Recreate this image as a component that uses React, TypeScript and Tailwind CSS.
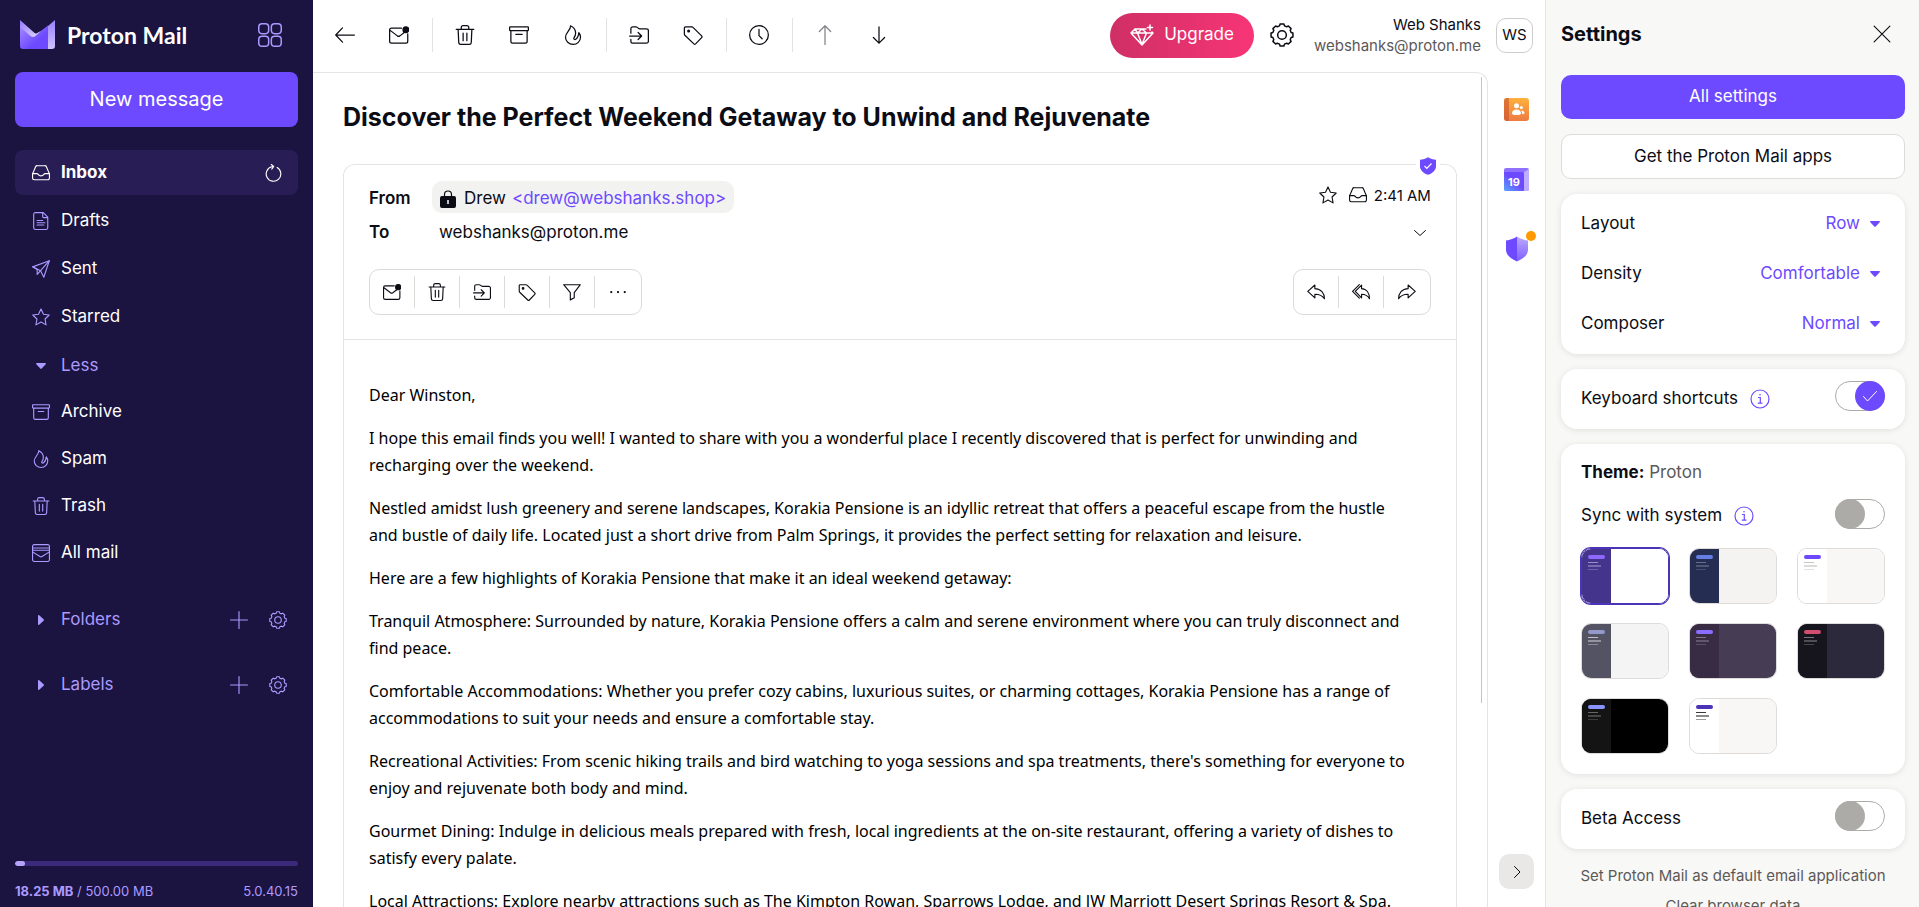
import { useState } from 'react'
import type { ReactNode } from 'react'
import clsx from 'clsx'

interface IconProps {
  className?: string
  children: ReactNode
}

function Icon({ className = 'size-[18px]', children }: IconProps) {
  return (
    <svg
      viewBox="0 0 16 16"
      fill="none"
      stroke="currentColor"
      strokeLinecap="round"
      strokeLinejoin="round"
      className={clsx('shrink-0', className)}
      aria-hidden="true"
    >
      {children}
    </svg>
  )
}

// Eight-toothed cog outline around the centre of a 16px grid
const COG_PATH = (() => {
  const points: string[] = []
  for (let i = 0; i < 8; i++) {
    for (const [offset, radius] of [[-15, 6.3], [-10, 7.4], [10, 7.4], [15, 6.3]]) {
      const angle = ((i * 45 + offset) * Math.PI) / 180
      points.push(`${(8 + radius * Math.sin(angle)).toFixed(2)} ${(8 - radius * Math.cos(angle)).toFixed(2)}`)
    }
  }
  return `M${points.join('L')}z`
})()

const icons = {
  inbox: (
    <>
      <path d="M4.6 1.5h6.8a1.5 1.5 0 0 1 1.4.9l2.4 5.7c.2.4.3.7.3 1.1v3.3a1.5 1.5 0 0 1-1.5 1.5H2a1.5 1.5 0 0 1-1.5-1.5V9.2c0-.4.1-.7.3-1.1l2.4-5.7a1.5 1.5 0 0 1 1.4-.9z" />
      <path d="M.8 8.5h3.4c.6 0 1 .3 1.3.7.5.8 1.3 1.3 2.5 1.3s2-.5 2.5-1.3c.3-.4.7-.7 1.3-.7h3.4" />
    </>
  ),
  drafts: (
    <>
      <path d="M3 .5h7l4 4V14a1.500 1.500 0 0 1-1.500 1.500H3A1.500 1.500 0 0 1 1.500 14V2A1.500 1.500 0 0 1 3 .5zM9.500.5V4A1 1 0 0 0 10.500 5H14" />
      <path d="M4.500 7.500h5M4.500 9.500h7M4.500 11.500h6" />
    </>
  ),
  sent: (
    <>
      <path d="M.6 6.100 15.400.6l-4.900 14.700-2.900-5.800z" />
      <path d="M7.600 9.500 15.300.7M.6 6.100l4 2.400v4.300l3-3.300" />
    </>
  ),
  star: <path d="m8 .8 2.200 4.700 5.100.7-3.700 3.600.9 5.200L8 12.500 3.500 15l.9-5.200L.7 6.200l5.100-.7z" />,
  archive: (
    <path d="M1 1.500h14a.5.5 0 0 1 .5.5v2a.5.5 0 0 1-.5.5H1a.5.5 0 0 1-.5-.5V2a.5.5 0 0 1 .5-.5zM1.500 4.500V13A1.500 1.500 0 0 0 3 14.500h10a1.500 1.500 0 0 0 1.500-1.500V4.500M5.500 7.500h5" />
  ),
  flame: (
    <path d="M6 .6c2.600 1.200 4.100 3.300 4.100 6 0 1.600-.6 2.700-1.400 3.900-.3.800.6 1.500 1.500.9 1.500-1 2.200-2.600 2.500-5.300.9 1.100 1.300 2.400 1.300 3.700A5.900 5.700 0 0 1 8 15.500C4.800 15.500 2 13 2 9.800c0-1.900.9-3.200 2.100-4.700C5.300 3.600 6.200 2.400 6 .6z" />
  ),
  trash: (
    <path d="M1 3.500h14M5 3.500V2a1.500 1.500 0 0 1 1.500-1.500h3A1.500 1.500 0 0 1 11 2v1.500M2.500 3.500l.5 10.600a1.500 1.500 0 0 0 1.500 1.400h7a1.500 1.500 0 0 0 1.500-1.400l.5-10.600M6.500 6.500v6M9.500 6.500v6" />
  ),
  allMail: (
    <>
      <path d="M2 .5h12A1.500 1.500 0 0 1 15.500 2v12a1.500 1.500 0 0 1-1.500 1.500H2A1.500 1.500 0 0 1 .5 14V2A1.500 1.500 0 0 1 2 .5z" />
      <path d="M.5 3.500h15M.5 5.500h15M.5 7l6.600 4.100c.6.4 1.200.4 1.800 0L15.500 7" />
    </>
  ),
  plus: <path d="M8 .5v15M.5 8h15" />,
  cog: (
    <>
      <path d={COG_PATH} />
      <circle cx="8" cy="8" r="2.900" />
    </>
  ),
  apps: (
    <>
      <rect x=".5" y=".5" width="6.600" height="6.600" rx="2.200" />
      <rect x="8.900" y=".5" width="6.600" height="6.600" rx="2.200" />
      <rect x=".5" y="8.900" width="6.600" height="6.600" rx="2.200" />
      <rect x="8.900" y="8.900" width="6.600" height="6.600" rx="2.200" />
    </>
  ),
  refresh: <path d="M11.700 3.200A6.500 6.500 0 1 1 7 2.500L8.200 2.300M6.500.4 8.600 2.200 6.900 4.500" />,
  back: <path d="M15.500 8H.7M6 2.300.6 8 6 13.700" />,
  unread: (
    <>
      <path d="M10 2.500H2A1.500 1.500 0 0 0 .5 4v9A1.500 1.500 0 0 0 2 14.500h11.500A1.500 1.500 0 0 0 15 13V7M1.200 4.500l5.500 4.200c.7.500 1.300.5 2 0L12 6.200" />
      <circle cx="13.500" cy="3.700" r="2.300" fill="currentColor" />
    </>
  ),
  move: (
    <path d="M1.500 6.500V3A1.500 1.500 0 0 1 3 1.500h2.500c.5 0 .8.1 1.100.4l1 .8c.3.2.6.3 1 .3H14A1.500 1.500 0 0 1 15.500 4.500V13a1.500 1.500 0 0 1-1.500 1.500H3A1.500 1.500 0 0 1 1.500 13v-1.500M.5 8.800H10M7.300 6l2.800 2.800-2.800 2.800" />
  ),
  tag: (
    <>
      <path d="M2 1.500h5c.4 0 .8.1 1 .4l6.900 6.800a1 1 0 0 1 0 1.400l-4.800 5a1 1 0 0 1-1.400 0L1.500 8.200a1.400 1.400 0 0 1-.4-1V2.300c0-.5.4-.8.9-.8z" />
      <circle cx="4.500" cy="4.800" r=".7" fill="currentColor" />
    </>
  ),
  clock: (
    <>
      <circle cx="8" cy="8" r="7.500" />
      <path d="M8 3.500V8.500L10.500 11" />
    </>
  ),
  up: <path d="M8 15.500V.7M3.500 5.200 8 .6l4.500 4.600" />,
  down: <path d="M8 1.500v13M3.500 10 8 14.500l4.500-4.500" />,
  filter: <path d="M.6 1.500h14.800L10 8.500v4.700L6.500 15V8.500z" />,
  more: (
    <g fill="currentColor" stroke="none">
      <circle cx="2" cy="8" r="1" />
      <circle cx="8" cy="8" r="1" />
      <circle cx="14" cy="8" r="1" />
    </g>
  ),
  reply: <path d="M7 1.800.7 7.500 7 13.200V10c3.800 0 6.500.8 8.500 4 0-5-3-8.800-8.500-9z" />,
  replyAll: (
    <path d="M8.500 1.800 2.900 7.500l5.600 5.700V10c3.300 0 5.300.8 7 4 0-5-2.500-8.800-7-9zM6.500 1.500.5 7.500l6 6" />
  ),
  forward: <path d="M9 1.800l6.300 5.700L9 13.200V10C5.200 10 2.500 10.800.5 14c0-5 3-8.800 8.500-9z" />,
  chevronDown: <path d="M2.500 5.500 8 10.500l5.500-5" />,
  chevronRight: <path d="M5.500 2.500 11 8l-5.500 5.500" />,
  close: <path d="M1 1l14 14M15 1 1 15" />,
}

type IconName = keyof typeof icons

const NAV_ITEMS: { label: string; icon: IconName }[] = [
  { label: 'Drafts', icon: 'drafts' },
  { label: 'Sent', icon: 'sent' },
  { label: 'Starred', icon: 'star' },
]

const MORE_NAV_ITEMS: { label: string; icon: IconName }[] = [
  { label: 'Archive', icon: 'archive' },
  { label: 'Spam', icon: 'flame' },
  { label: 'Trash', icon: 'trash' },
  { label: 'All mail', icon: 'allMail' },
]

const TOOLBAR_GROUPS: { label: string; icon: IconName; disabled?: boolean }[][] = [
  [
    { label: 'Back', icon: 'back' },
    { label: 'Mark as unread', icon: 'unread' },
  ],
  [
    { label: 'Move to trash', icon: 'trash' },
    { label: 'Archive', icon: 'archive' },
    { label: 'Move to spam', icon: 'flame' },
  ],
  [
    { label: 'Move to', icon: 'move' },
    { label: 'Label as', icon: 'tag' },
  ],
  [{ label: 'Snooze', icon: 'clock' }],
  [
    { label: 'Previous message', icon: 'up', disabled: true },
    { label: 'Next message', icon: 'down' },
  ],
]

const MESSAGE_ACTIONS: { label: string; icon: IconName }[] = [
  { label: 'Mark as unread', icon: 'unread' },
  { label: 'Move to trash', icon: 'trash' },
  { label: 'Move to', icon: 'move' },
  { label: 'Label as', icon: 'tag' },
  { label: 'Filter on', icon: 'filter' },
  { label: 'More', icon: 'more' },
]

const REPLY_ACTIONS: { label: string; icon: IconName }[] = [
  { label: 'Reply', icon: 'reply' },
  { label: 'Reply all', icon: 'replyAll' },
  { label: 'Forward', icon: 'forward' },
]

const PARAGRAPHS = [
  'Dear Winston,',
  'I hope this email finds you well! I wanted to share with you a wonderful place I recently discovered that is perfect for unwinding and recharging over the weekend.',
  'Nestled amidst lush greenery and serene landscapes, Korakia Pensione is an idyllic retreat that offers a peaceful escape from the hustle and bustle of daily life. Located just a short drive from Palm Springs, it provides the perfect setting for relaxation and leisure.',
  'Here are a few highlights of Korakia Pensione that make it an ideal weekend getaway:',
  'Tranquil Atmosphere: Surrounded by nature, Korakia Pensione offers a calm and serene environment where you can truly disconnect and find peace.',
  'Comfortable Accommodations: Whether you prefer cozy cabins, luxurious suites, or charming cottages, Korakia Pensione has a range of accommodations to suit your needs and ensure a comfortable stay.',
  "Recreational Activities: From scenic hiking trails and bird watching to yoga sessions and spa treatments, there's something for everyone to enjoy and rejuvenate both body and mind.",
  'Gourmet Dining: Indulge in delicious meals prepared with fresh, local ingredients at the on-site restaurant, offering a variety of dishes to satisfy every palate.',
  'Local Attractions: Explore nearby attractions such as The Kimpton Rowan, Sparrows Lodge, and JW Marriott Desert Springs Resort & Spa.',
]

const THEMES = [
  { name: 'Proton', side: '#44348c', main: '#ffffff', accent: '#8f69ff', lines: '#9a8fc4' },
  { name: 'Duotone', side: '#262d52', main: '#f4f3f2', accent: '#657ee4', lines: '#6a6f8a' },
  { name: 'Snow', side: '#ffffff', main: '#f8f7f6', accent: '#6d4aff', lines: '#c8c4c0' },
  { name: 'Classic', side: '#535364', main: '#f4f4f4', accent: '#9498cb', lines: '#c0c0c8' },
  { name: 'Legacy', side: '#372c44', main: '#463c54', accent: '#8a6eff', lines: '#7d7488' },
  { name: 'Monokai', side: '#16141c', main: '#2c293d', accent: '#d04f70', lines: '#77757c' },
  { name: 'Carbon', side: '#141414', main: '#000000', accent: '#8a94ff', lines: '#666666' },
  { name: 'Contrast', side: '#ffffff', main: '#f8f7f6', accent: '#4b34b8', lines: '#3a3a3a' },
]

const STORAGE_USED = 18.25
const STORAGE_TOTAL = 500

function ProtonLogo() {
  return (
    <a href="#inbox" className="flex items-center gap-[11px] text-white">
      <svg viewBox="0 0 36 29" className="h-[29px] w-9" aria-hidden="true">
        <defs>
          <linearGradient id="logo-body" x1="0" y1="0" x2="1" y2="1">
            <stop offset="0" stopColor="#a38bff" />
            <stop offset=".65" stopColor="#6d4aff" />
          </linearGradient>
          <linearGradient id="logo-flap" x1="0" y1="0" x2="1" y2="1">
            <stop offset="0" stopColor="#9277ff" />
            <stop offset="1" stopColor="#e2dbff" />
          </linearGradient>
          <linearGradient id="logo-edge" x1="0" y1="0" x2="0" y2="1">
            <stop offset="0" stopColor="#9a80ff" />
            <stop offset="1" stopColor="#cfc3ff" />
          </linearGradient>
        </defs>
        <path d="M0 6 13 17 28 5.500V29H3a3 3 0 0 1-3-3z" fill="url(#logo-body)" />
        <path d="M28 6 35 0v26a3 3 0 0 1-3 3h-4z" fill="url(#logo-edge)" />
        <path d="M0 0l14 12.500c1.500 1.200 2.500 1.200 4 0L21 11l-5.500 5c-1.600 1.400-3.400 1.400-5 0L0 7z" fill="url(#logo-flap)" />
      </svg>
      <span className="font-['Lato'] text-[23px] leading-7 font-bold">Proton Mail</span>
    </a>
  )
}

function Caret({ className }: { className?: string }) {
  return (
    <svg viewBox="0 0 10 6" fill="currentColor" className={clsx('h-[6px] w-[10px] shrink-0', className)} aria-hidden="true">
      <path d="M.8 0h8.400c.7 0 1 .7.5 1.200L5.700 5.600a1 1 0 0 1-1.400 0L.3 1.200C-.2.7.1 0 .8 0z" />
    </svg>
  )
}

function NavLink({ label, icon }: { label: string; icon: IconName }) {
  return (
    <li>
      <a href={`#${label}`} className="flex h-[45px] items-center gap-[11px] rounded-lg px-[17px] hover:bg-[#281d55]">
        <Icon className="size-[18px] text-[#ab9aff]">{icons[icon]}</Icon>
        {label}
      </a>
    </li>
  )
}

function NavSection({ label }: { label: string }) {
  return (
    <div className="flex h-[45px] items-center px-[17px] text-[#ab9aff]">
      <button type="button" className="flex grow items-center gap-[11px]">
        <span className="flex w-[18px] justify-center">
          <Caret className="-rotate-90" />
        </span>
        {label}
      </button>
      <button type="button" aria-label={`Add to ${label}`} className="mr-[21px]">
        <Icon>{icons.plus}</Icon>
      </button>
      <button type="button" aria-label={`Manage ${label}`} className="-mr-1.5">
        <Icon>{icons.cog}</Icon>
      </button>
    </div>
  )
}

function Sidebar() {
  return (
    <aside className="flex w-[313px] shrink-0 flex-col bg-[#1b1340] px-[15px] text-[17px] text-white">
      <div className="flex h-[70px] items-center justify-between pr-4 pb-px pl-[5px]">
        <ProtonLogo />
        <button type="button" aria-label="Proton apps" className="text-[#ab9aff]">
          <Icon className="size-6">{icons.apps}</Icon>
        </button>
      </div>
      <button type="button" className="mt-0.5 h-[55px] shrink-0 rounded-lg bg-[#6d4aff] pb-0.5 text-[20px]">
        New message
      </button>
      <nav className="mt-[23px]">
        <ul className="flex flex-col gap-[3px]">
          <li className="flex h-[45px] items-center rounded-lg bg-[#281d55] pr-4 pl-[17px]">
            <a href="#inbox" className="flex grow items-center gap-[11px] font-bold">
              <Icon>{icons.inbox}</Icon>
              Inbox
            </a>
            <button type="button" aria-label="Refresh">
              <Icon>{icons.refresh}</Icon>
            </button>
          </li>
          {NAV_ITEMS.map((item) => (
            <NavLink key={item.label} {...item} />
          ))}
        </ul>
        <button type="button" className="mt-1 flex h-[45px] w-full items-center gap-[11px] px-[17px] text-[#ab9aff]">
          <span className="flex w-[18px] justify-center">
            <Caret />
          </span>
          Less
        </button>
        <ul className="mt-px flex flex-col gap-[2px]">
          {MORE_NAV_ITEMS.map((item) => (
            <NavLink key={item.label} {...item} />
          ))}
        </ul>
      </nav>
      <div className="mt-[22px] flex flex-col gap-5">
        <NavSection label="Folders" />
        <NavSection label="Labels" />
      </div>
      <footer className="mt-auto pb-2 text-[#ab9aff]">
        <div className="h-[5px] overflow-hidden rounded-full bg-[#3b2a7c]">
          <div className="h-full rounded-full bg-[#b5a5f8]" style={{ width: `${(STORAGE_USED / STORAGE_TOTAL) * 100}%` }} />
        </div>
        <div className="mt-[17px] flex justify-between text-[13px] leading-4">
          <span>
            <strong>{STORAGE_USED} MB</strong> / {STORAGE_TOTAL.toFixed(2)} MB
          </span>
          <span>5.0.40.15</span>
        </div>
      </footer>
    </aside>
  )
}

function Toolbar() {
  return (
    <div className="flex items-center pl-[5px]" role="toolbar">
      {TOOLBAR_GROUPS.map((group, index) => (
        <div key={index} className="flex items-center">
          {index > 0 && <span className="mr-[5px] ml-[6px] h-[34px] w-px bg-[#e2e2e2]" />}
          {group.map(({ label, icon, disabled }) => (
            <button
              key={label}
              type="button"
              aria-label={label}
              disabled={disabled}
              className="flex h-10 w-[54px] items-center justify-center disabled:opacity-50"
            >
              <Icon className="size-5">{icons[icon]}</Icon>
            </button>
          ))}
        </div>
      ))}
    </div>
  )
}

function Header() {
  return (
    <header className="flex h-[72px] shrink-0 items-center justify-between pr-3 pb-0.5">
      <Toolbar />
      <div className="flex items-center">
        <button
          type="button"
          className="flex h-[45px] items-center gap-2.5 rounded-full bg-linear-to-r from-[#cf2f65] to-[#f73577] px-5 text-[17px] text-white"
        >
          <svg viewBox="0 0 24 22" fill="none" stroke="currentColor" strokeWidth="1.500" strokeLinejoin="round" strokeLinecap="round" className="h-[22px] w-6" aria-hidden="true">
            <path d="M16 5H5L1 9l11 12L23 9l-1-1M1 9h21M7.500 9 12 20.500 16.500 9M5 5l2.500 4L12 5l4.500 4" />
            <path d="M20 1v5M17.500 3.500h5" />
          </svg>
          Upgrade
        </button>
        <button type="button" aria-label="Settings" className="ml-4">
          <Icon className="size-6">{icons.cog}</Icon>
        </button>
        <button type="button" className="ml-5 flex items-center gap-[15px]">
          <span className="text-right text-[15px] leading-[21px]">
            <span className="block">Web Shanks</span>
            <span className="block text-[#5c5958]">webshanks@proton.me</span>
          </span>
          <span className="flex h-[35px] w-[37px] items-center justify-center rounded-[10px] border border-[#cfcdca] text-[15px]">
            WS
          </span>
        </button>
      </div>
    </header>
  )
}

function ActionGroup({ actions }: { actions: { label: string; icon: IconName }[] }) {
  return (
    <div className="flex h-[46px] items-center divide-x divide-[#dddbd8] rounded-[10px] border border-[#dddbd8]">
      {actions.map(({ label, icon }) => (
        <button key={label} type="button" aria-label={label} className="flex h-8 w-[45px] items-center justify-center last:w-[46px]">
          <Icon>{icons[icon]}</Icon>
        </button>
      ))}
    </div>
  )
}

function Message() {
  return (
    <article className="relative mt-[31px] rounded-t-xl border border-b-0 border-[#e6e4e2]">
      <span className="absolute -top-2 right-4 bg-white px-1">
        <svg viewBox="0 0 16 18" className="h-[18px] w-4" aria-hidden="true">
          <path d="M8 .3c2.500 1.600 5 2.200 8 2.400v6.500c0 4-3.500 7-8 8.600-4.500-1.600-8-4.600-8-8.600V2.700C3 2.500 5.500 1.900 8 .3z" fill="#6d4aff" />
          <path d="m4.500 9 2.300 2.300L11.500 6.500" fill="none" stroke="#fff" strokeWidth="1.200" />
        </svg>
      </span>
      <div className="flex flex-col border-b border-[#e6e4e2] px-[25px] pt-4 pb-6">
        <div className="flex items-center justify-between">
          <div className="flex items-center">
            <span className="w-[63px] pt-1 text-[17px] font-semibold">From</span>
            <span className="flex h-8 items-center rounded-[10px] bg-[#f2f2f0] px-2 pt-1 text-[17px]">
              <svg viewBox="0 0 16 18" className="mr-2 h-[18px] w-4" aria-hidden="true">
                <path d="M4.500 7V4.500a3.500 3.500 0 0 1 7 0V7" fill="none" stroke="#0c0c14" strokeWidth="1.200" />
                <rect y="6" width="16" height="12" rx="2" fill="#0c0c14" />
                <path d="M8 10v4" stroke="#fff" strokeWidth="1.500" />
              </svg>
              Drew
              <a href="mailto:drew@webshanks.shop" className="ml-1.5 text-[#6d4aff]">
                &lt;drew@webshanks.shop&gt;
              </a>
            </span>
          </div>
          <div className="flex items-center gap-3 pb-1">
            <button type="button" aria-label="Star message">
              <Icon>{icons.star}</Icon>
            </button>
            <span className="flex items-center gap-[7px] text-[15px]">
              <Icon>{icons.inbox}</Icon>
              <time className="pt-0.5">2:41 AM</time>
            </span>
          </div>
        </div>
        <div className="mt-[5px] flex h-[30px] items-center justify-between">
          <p className="flex text-[17px]">
            <span className="w-[70px] font-semibold">To</span>
            webshanks@proton.me
          </p>
          <button type="button" aria-label="Show details" className="mr-[3px]">
            <Icon className="size-4">{icons.chevronDown}</Icon>
          </button>
        </div>
        <div className="mt-[21px] flex justify-between">
          <ActionGroup actions={MESSAGE_ACTIONS} />
          <ActionGroup actions={REPLY_ACTIONS} />
        </div>
      </div>
      <div className="flex flex-col gap-4 pt-[42px] pr-10 pl-[25px] font-['Noto_Sans',sans-serif] text-[16px] leading-[27px] text-black">
        {PARAGRAPHS.map((text) => (
          <p key={text}>{text}</p>
        ))}
      </div>
    </article>
  )
}

function AppRail() {
  return (
    <nav className="flex w-[57px] shrink-0 flex-col items-center pt-[26px] pb-[18px]" aria-label="Side apps">
      <button type="button" aria-label="Contacts">
        <svg viewBox="0 0 25 23" className="h-[23px] w-[25px]" aria-hidden="true">
          <defs>
            <linearGradient id="contacts-bg" x1="0" y1="0" x2="0" y2="1">
              <stop offset="0" stopColor="#ffb13d" />
              <stop offset="1" stopColor="#ee7b42" />
            </linearGradient>
          </defs>
          <rect width="25" height="23" rx="3" fill="url(#contacts-bg)" />
          <path d="M3 0h2v23H3a3 3 0 0 1-3-3V3a3 3 0 0 1 3-3z" fill="#c9562f" opacity=".65" />
          <g fill="#fff">
            <circle cx="12.500" cy="7.800" r="2.500" />
            <circle cx="17.300" cy="9.500" r="1.600" />
            <path d="M8 15c0-2 2-3.500 4.500-3.500S17 13 17 15s-2 2-4.500 2S8 17 8 15zM17 12.500c2 0 3.500 1 3.500 2.500 0 .7-1 1-2.500 1 0-1.500 0-2.500-1-3.500z" />
          </g>
        </svg>
      </button>
      <button type="button" aria-label="Calendar" className="relative mt-[47px]">
        <svg viewBox="0 0 25 23" className="h-[23px] w-[25px]" aria-hidden="true">
          <defs>
            <linearGradient id="calendar-bg" x1="0" y1="1" x2=".7" y2=".2">
              <stop offset="0" stopColor="#58a8ff" />
              <stop offset=".7" stopColor="#6d4aff" />
            </linearGradient>
          </defs>
          <rect width="25" height="23" rx="2" fill="#8f70ff" />
          <path d="M20 4l5-3v20a2 2 0 0 1-2 2h-3z" fill="#bfaeff" />
          <path d="M0 4h18a2 2 0 0 1 2 2v17H2a2 2 0 0 1-2-2z" fill="url(#calendar-bg)" />
        </svg>
        <span className="absolute top-[7px] left-1 text-[11px] leading-[14px] font-bold text-white">19</span>
      </button>
      <button type="button" aria-label="Security center" className="relative mt-[45px]">
        <svg viewBox="0 0 24 26" className="h-[26px] w-6" aria-hidden="true">
          <defs>
            <linearGradient id="shield-half" x1="0" y1="0" x2="0" y2="1">
              <stop offset="0" stopColor="#bcaaff" />
              <stop offset="1" stopColor="#7f5eff" />
            </linearGradient>
          </defs>
          <path d="M12 .5v25C5 22 1 19 1 13.500V4.500C5 4 9 2.500 12 .5z" fill="#6d4aff" />
          <path d="M12 .5v25c7-3.500 11-6.500 11-12v-9C19 4 15 2.500 12 .5z" fill="url(#shield-half)" />
        </svg>
        <span className="absolute -top-[5px] -right-[7px] size-[10px] rounded-full bg-[#ff9900]" />
      </button>
      <button type="button" aria-label="Hide side panel" className="mt-auto flex size-[35px] items-center justify-center rounded-[10px] bg-[#e9e8e6]">
        <Icon className="size-4">{icons.chevronRight}</Icon>
      </button>
    </nav>
  )
}

function Toggle({ id, defaultChecked = false }: { id: string; defaultChecked?: boolean }) {
  const [checked, setChecked] = useState(defaultChecked)
  return (
    <span className="relative flex h-[30px] w-[50px] shrink-0">
      <input
        id={id}
        type="checkbox"
        checked={checked}
        onChange={(e) => setChecked(e.target.checked)}
        className="size-full cursor-pointer appearance-none rounded-full border border-[#adaba8] bg-white"
      />
      <span
        className={clsx(
          'pointer-events-none absolute top-0 flex size-[30px] items-center justify-center rounded-full text-white',
          checked ? 'right-0 bg-[#6d4aff]' : 'left-0 bg-[#adaba8]',
        )}
      >
        {checked && (
          <Icon className="size-4">
            <path d="m1.500 8.500 4 4.500 9-9.500" />
          </Icon>
        )}
      </span>
    </span>
  )
}

function InfoIcon() {
  return (
    <svg viewBox="0 0 20 20" fill="none" stroke="#6d4aff" strokeWidth="1.200" className="ml-3 size-5" aria-hidden="true">
      <circle cx="10" cy="10" r="9" />
      <path d="M8 8.500h2.300V14M7.800 14.200h4.600" />
      <circle cx="10" cy="5.800" r=".8" fill="#6d4aff" stroke="none" />
    </svg>
  )
}

function SelectRow({ label, options }: { label: string; options: string[] }) {
  const id = `setting-${label.toLowerCase()}`
  return (
    <div className="flex h-[50px] items-center">
      <label htmlFor={id} className="grow">
        {label}
      </label>
      <select id={id} className="appearance-none bg-transparent text-right text-[#6d4aff] [text-align-last:right]">
        {options.map((option) => (
          <option key={option}>{option}</option>
        ))}
      </select>
      <Caret className="mr-[5px] ml-[10px] text-[#6d4aff]" />
    </div>
  )
}

function Card({ className, children }: { className?: string; children: ReactNode }) {
  return (
    <section className={clsx('shrink-0 rounded-2xl bg-white px-5 shadow-[0_1px_6px_rgba(0,0,0,0.1)]', className)}>
      {children}
    </section>
  )
}

function ThemePicker() {
  const [active, setActive] = useState('Proton')
  return (
    <div className="mt-[19px] grid grid-cols-[repeat(3,88px)] justify-between gap-y-[19px]">
      {THEMES.map(({ name, side, main, accent, lines }) => (
        <button
          key={name}
          type="button"
          aria-label={name}
          aria-pressed={active === name}
          onClick={() => setActive(name)}
          className={clsx(
            'h-14 overflow-hidden rounded-[10px] border',
            active === name ? 'border-[#4b34b8] ring-1 ring-[#4b34b8]' : 'border-[#dedbd8]',
          )}
        >
          <svg viewBox="0 0 86 54" className="size-full" aria-hidden="true">
            <rect width="86" height="54" fill={main} />
            <rect width="29" height="54" fill={side} />
            <rect x="6" y="6" width="17" height="4" rx="2" fill={accent} />
            <rect x="6" y="13" width="10" height="1" fill={lines} />
            <rect x="6" y="16" width="13" height="2" fill={lines} opacity=".6" />
            <rect x="6" y="20" width="10" height="1" fill={lines} opacity=".5" />
          </svg>
        </button>
      ))}
    </div>
  )
}

function SettingsPanel() {
  return (
    <aside className="flex w-[374px] shrink-0 flex-col gap-[15px] overflow-hidden border-l border-[#e6e4e2] bg-[#f8f8f7] pr-[14px] pl-[15px] text-[17px]">
      <div className="flex h-15 shrink-0 items-center justify-between pt-2 pr-[14px]">
        <h2 className="text-[20px] font-bold">Settings</h2>
        <button type="button" aria-label="Close settings">
          <Icon>{icons.close}</Icon>
        </button>
      </div>
      <button type="button" className="h-11 shrink-0 rounded-[10px] bg-[#6d4aff] text-white">
        All settings
      </button>
      <button type="button" className="h-[45px] shrink-0 rounded-[10px] border border-[#dddcd8] bg-white">
        Get the Proton Mail apps
      </button>
      <Card className="py-[5px]">
        <SelectRow label="Layout" options={['Row', 'Column']} />
        <SelectRow label="Density" options={['Comfortable', 'Compact']} />
        <SelectRow label="Composer" options={['Normal', 'Maximized']} />
      </Card>
      <Card className="flex h-15 items-center">
        <label htmlFor="shortcuts">Keyboard shortcuts</label>
        <InfoIcon />
        <span className="mb-1.5 ml-auto">
          <Toggle id="shortcuts" defaultChecked />
        </span>
      </Card>
      <Card className="pt-4 pb-5">
        <p className="leading-6">
          <strong>Theme:</strong> <span className="text-[#5c5958]">Proton</span>
        </p>
        <div className="mt-[15px] flex items-center">
          <span className="flex items-center pt-1">
            <label htmlFor="sync">Sync with system</label>
            <InfoIcon />
          </span>
          <span className="ml-auto">
            <Toggle id="sync" />
          </span>
        </div>
        <ThemePicker />
      </Card>
      <Card className="flex h-15 items-center">
        <label htmlFor="beta">Beta Access</label>
        <span className="mb-1.5 ml-auto">
          <Toggle id="beta" />
        </span>
      </Card>
      <div className="flex shrink-0 flex-col items-center gap-[10px] pt-0.5 text-[15px] leading-5 text-[#5c5958]">
        <button type="button">Set Proton Mail as default email application</button>
        <button type="button">Clear browser data</button>
      </div>
    </aside>
  )
}

export default function App() {
  return (
    <div className="flex h-screen overflow-hidden bg-white font-['Inter',sans-serif] text-[#0c0c14]">
      <Sidebar />
      <div className="flex min-w-0 grow flex-col">
        <Header />
        <div className="flex min-h-0 grow">
          <main className="flex min-w-0 grow overflow-hidden rounded-tr-xl border-t border-r border-[#e6e4e2]">
            <div className="min-w-0 grow pr-6 pl-[30px]">
              <h1 className="mt-7 text-[25px] leading-8 font-bold">
                Discover the Perfect Weekend Getaway to Unwind and Rejuvenate
              </h1>
              <Message />
            </div>
            <div className="mt-1 mr-[5px] h-3/4 w-0.5 rounded-full bg-[#c4c4c4]" />
          </main>
          <AppRail />
        </div>
      </div>
      <SettingsPanel />
    </div>
  )
}
